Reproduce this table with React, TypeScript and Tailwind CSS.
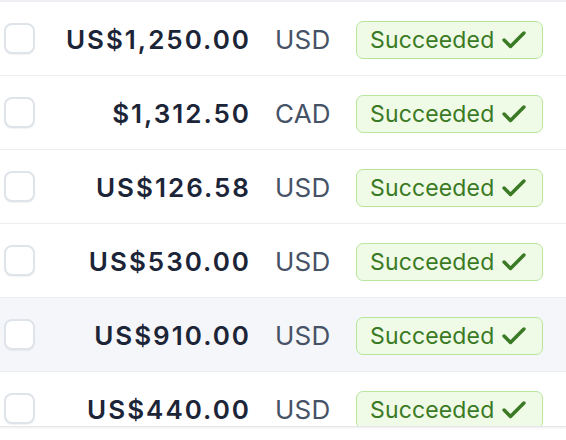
const rows = [
  { amount: 'US$1,250.00', currency: 'USD' },
  { amount: '$1,312.50', currency: 'CAD' },
  { amount: 'US$126.58', currency: 'USD' },
  { amount: 'US$530.00', currency: 'USD' },
  { amount: 'US$910.00', currency: 'USD', hover: true },
  { amount: 'US$440.00', currency: 'USD' },
];

function CheckIcon() {
  return (
    <svg width="28" height="28" viewBox="0 0 24 24" fill="none" stroke="currentColor" strokeWidth="3" strokeLinecap="round" strokeLinejoin="round">
      <polyline points="20.5 6 9 17.5 3.5 12" />
    </svg>
  );
}

function StatusBadge() {
  return (
    <span className="mt-[3px] inline-flex items-center gap-[6px] h-[38px] w-[187px] pl-[13px] rounded-[7px] border-[1.5px] border-[#b8e59c] bg-[#effbe7] text-[#3b7a24] text-[23px] tracking-[0.15px]">
      Succeeded
      <CheckIcon />
    </span>
  );
}

export default function App() {
  return (
    <div className="bg-white w-[566px] h-[440px] font-['Inter',sans-serif]">
      <div className="h-[427px] overflow-hidden border-t-2 border-[#eef0f3] shadow-[0_1px_2px_rgba(0,0,0,0.08)] border-b border-b-[#e6e8ec]">
        {rows.map((row) => (
          <div
            key={row.amount}
            className={`flex items-center h-[74px] border-b border-[#eceef1] ${row.hover ? 'bg-[#f5f6f9]' : 'bg-white'}`}
          >
            <div className="w-[36px] pl-[4px] shrink-0">
              <div className="w-[31px] h-[31px] rounded-[8px] border-2 border-[#dfe3ea] bg-white shadow-[0_1px_1px_rgba(0,0,0,0.05)]" />
            </div>
            <div className="w-[215px] shrink-0 pt-[2px] text-right text-[26px] font-semibold text-[#1c2537] tracking-[2px]">
              {row.amount}
            </div>
            <div className="w-[105px] shrink-0 pt-[2px] pl-[24px] text-[26px] text-[#465266] tracking-[0.2px]">
              {row.currency}
            </div>
            <StatusBadge />
          </div>
        ))}
      </div>
    </div>
  );
}
